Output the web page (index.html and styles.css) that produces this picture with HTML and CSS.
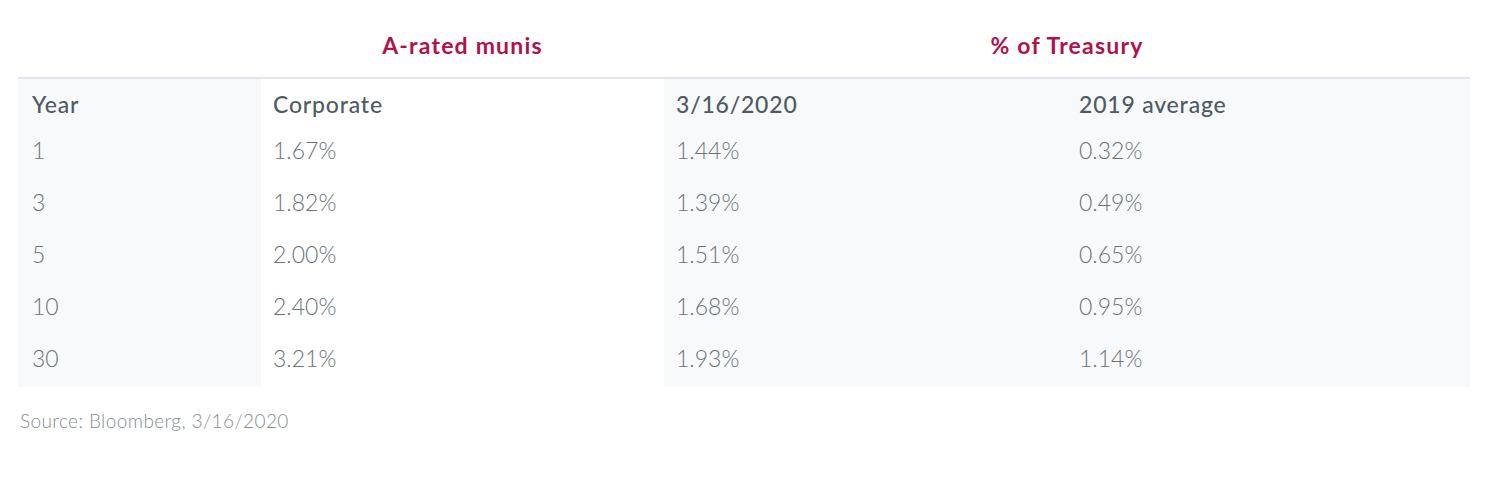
FILE: index.html
```html
<!DOCTYPE html>
<html>
<head>
<meta charset="utf-8">
<link rel="stylesheet" href="styles.css">
</head>
<body>
<div class="wrap">
  <table class="rates">
    <colgroup>
      <col class="c1"><col class="c2"><col class="c3"><col class="c4">
    </colgroup>
    <thead>
      <tr class="group">
        <th></th>
        <th>A-rated munis</th>
        <th colspan="2">% of Treasury</th>
      </tr>
      <tr class="head">
        <th class="shade first">Year</th>
        <th>Corporate</th>
        <th class="shade">3/16/2020</th>
        <th class="shade">2019 average</th>
      </tr>
    </thead>
    <tbody>
      <tr><td class="shade first">1</td><td>1.67%</td><td class="shade">1.44%</td><td class="shade">0.32%</td></tr>
      <tr><td class="shade first">3</td><td>1.82%</td><td class="shade">1.39%</td><td class="shade">0.49%</td></tr>
      <tr><td class="shade first">5</td><td>2.00%</td><td class="shade">1.51%</td><td class="shade">0.65%</td></tr>
      <tr><td class="shade first">10</td><td>2.40%</td><td class="shade">1.68%</td><td class="shade">0.95%</td></tr>
      <tr><td class="shade first">30</td><td>3.21%</td><td class="shade">1.93%</td><td class="shade">1.14%</td></tr>
    </tbody>
  </table>
  <p class="source">Source: Bloomberg, 3/16/2020</p>
</div>
</body>
</html>
```
FILE: styles.css
```css
html, body {
  margin: 0;
  padding: 0;
  background: #ffffff;
}
body {
  font-family: Lato, "Noto Sans", sans-serif;
}
.wrap {
  padding-left: 18px;
  width: 1452px;
}
.rates {
  border-collapse: collapse;
  table-layout: fixed;
  width: 1452px;
}
.c1 { width: 243px; }
.c2 { width: 403px; }
.c3 { width: 403px; }
.c4 { width: 403px; }

.group th {
  height: 78px;
  padding: 0;
  text-align: center;
  vertical-align: top;
  padding-top: 30px;
  box-sizing: border-box;
  font-size: 23px;
  font-weight: 700;
  letter-spacing: 1.2px;
  color: #b0124a;
  border-bottom: 2px solid #e3e6ee;
  line-height: 30px;
}
.head th {
  height: 49px;
  text-align: left;
  font-weight: 500;
  font-size: 23px;
  letter-spacing: 0.8px;
  color: #4f5b62;
  padding: 2px 0 0 12px;
  vertical-align: middle;
  line-height: 30px;
  box-sizing: border-box;
}
tbody td {
  height: 52px;
  padding: 0 0 0 12px;
  font-size: 23px;
  font-weight: 300;
  color: #6b7378;
  vertical-align: middle;
  line-height: 30px;
  padding-bottom: 6px;
  box-sizing: border-box;
}
.shade {
  background: #f8f9fb;
}
.first {
  padding-left: 14px !important;
}
.source {
  margin: 22px 0 0 2px;
  font-size: 19px;
  font-weight: 300;
  letter-spacing: 0.4px;
  color: #868d92;
}
```
